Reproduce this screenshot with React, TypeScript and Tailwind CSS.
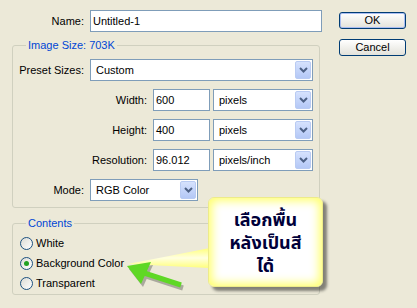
import type { ReactNode } from 'react'

const labelCls = 'text-right pr-[6px] shrink-0'

function TextBox({ value, width }: { value: string; width?: string }) {
  return (
    <div className={`flex h-[22px] items-center border border-[#7F9DB9] bg-white pl-[2px] ${width ?? 'flex-1'}`}>
      {value}
    </div>
  )
}

function Combo({ value, width }: { value: string; width: string }) {
  return (
    <div className={`flex h-[22px] items-stretch border border-[#7F9DB9] bg-white ${width}`}>
      <span className="flex flex-1 items-center pl-[5px]">{value}</span>
      <span className="m-[1px] flex w-[16px] items-center justify-center rounded-[2px] border border-[#B9CBF3] bg-linear-to-b from-[#D6E2FD] to-[#B4C8F6]">
        <svg width="9" height="6" viewBox="0 0 9 6">
          <polyline points="1,1 4.5,4.5 8,1" fill="none" stroke="#4D6185" strokeWidth="2" />
        </svg>
      </span>
    </div>
  )
}

function Group({ title, children, className }: { title: string; children: ReactNode; className: string }) {
  return (
    <fieldset className={`ml-[12px] w-[308px] rounded-[3px] border border-[#D0D0BF] ${className}`}>
      <legend className="ml-[13px] px-[2px] leading-[13px] text-[#0046D5]">{title}</legend>
      {children}
    </fieldset>
  )
}

function Radio({ label, checked }: { label: string; checked?: boolean }) {
  return (
    <div className="flex h-[20px] items-center pl-[7px]">
      <span className="flex h-[13px] w-[13px] items-center justify-center rounded-full border border-[#1C5180] bg-linear-to-br from-[#DCDCD5] to-white">
        {checked && <span className="h-[5px] w-[5px] rounded-full bg-[#21A121]" />}
      </span>
      <span className="ml-[3px]">{label}</span>
    </div>
  )
}

function XpButton({ label, isDefault }: { label: string; isDefault?: boolean }) {
  return (
    <button
      className={`flex h-[17px] w-[67px] items-center justify-center rounded-[3px] border border-[#003C74] bg-linear-to-b from-white to-[#E3E2DA] ${
        isDefault ? 'shadow-[inset_0_0_0_1px_#A9BDF2]' : ''
      }`}
    >
      {label}
    </button>
  )
}

export default function App() {
  return (
    <div className="relative h-[308px] w-[417px] overflow-hidden bg-[#ECE9D8] font-['Liberation_Sans',Arial,sans-serif] text-[11px] text-black">
      <div className="flex pt-[10px]">
        <div className="w-[322px] shrink-0">
          <div className="flex items-center">
            <span className={`${labelCls} w-[90px]`}>Name:</span>
            <TextBox value="Untitled-1" />
          </div>

          <Group title="Image Size: 703K" className="mt-[7px] pb-[6px]">
            <div className="flex flex-col gap-[8px] pt-[7px]">
              <div className="flex items-center">
                <span className={`${labelCls} w-[77px]`}>Preset Sizes:</span>
                <Combo value="Custom" width="w-[223px]" />
              </div>
              {[
                ['Width:', '600', 'pixels'],
                ['Height:', '400', 'pixels'],
                ['Resolution:', '96.012', 'pixels/inch'],
              ].map(([label, value, unit]) => (
                <div key={label} className="flex items-center">
                  <span className={`${labelCls} w-[140px]`}>{label}</span>
                  <TextBox value={value} width="w-[57px]" />
                  <div className="ml-[3px]">
                    <Combo value={unit} width="w-[100px]" />
                  </div>
                </div>
              ))}
              <div className="flex items-center">
                <span className={`${labelCls} w-[77px]`}>Mode:</span>
                <Combo value="RGB Color" width="w-[108px]" />
              </div>
            </div>
          </Group>

          <Group title="Contents" className="mt-[9px] pb-[1px]">
            <div className="pt-[3px]">
              <Radio label="White" />
              <Radio label="Background Color" checked />
              <Radio label="Transparent" />
            </div>
          </Group>
        </div>

        <div className="ml-[17px] flex flex-col gap-[10px] pt-[2px]">
          <XpButton label="OK" isDefault />
          <XpButton label="Cancel" />
        </div>
      </div>

      {/* callout pointer and green arrow */}
      <svg className="absolute left-[120px] top-[240px]" width="100" height="55" viewBox="120 240 100 55">
        <defs>
          <linearGradient id="wedge" x1="0" y1="0" x2="0" y2="1">
            <stop offset="0" stopColor="#FFFF7A" />
            <stop offset="0.5" stopColor="#FFFFE0" />
            <stop offset="1" stopColor="#FFFF7A" />
          </linearGradient>
        </defs>
        <polygon points="210,248 210,268 128,264" fill="url(#wedge)" />
        <g opacity="0.35" transform="translate(2,3)">
          <line x1="181" y1="285" x2="138" y2="271" stroke="#333" strokeWidth="5" />
          <polygon points="127,266 151,262 141,284" fill="#333" />
        </g>
        <line x1="181" y1="285" x2="138" y2="271" stroke="#5FD825" strokeWidth="5" />
        <polygon points="127,266 151,262 141,284" fill="#5FD825" />
      </svg>

      <div className="absolute left-[208px] top-[197px] flex h-[90px] w-[115px] items-center justify-center rounded-[6px] border border-[#EDEB8A] bg-white pt-[2px] shadow-[inset_0_0_10px_3px_#FFFF6E,4px_4px_3px_rgba(0,0,0,0.45)]">
        <p className="text-center font-['Noto_Sans_Thai','Tahoma','Noto_Sans',sans-serif] text-[18px] font-bold leading-[23px] text-[#00003A]">
          เลือกพื้น
          <br />
          หลังเป็นสี
          <br />
          ได้
        </p>
      </div>
    </div>
  )
}
